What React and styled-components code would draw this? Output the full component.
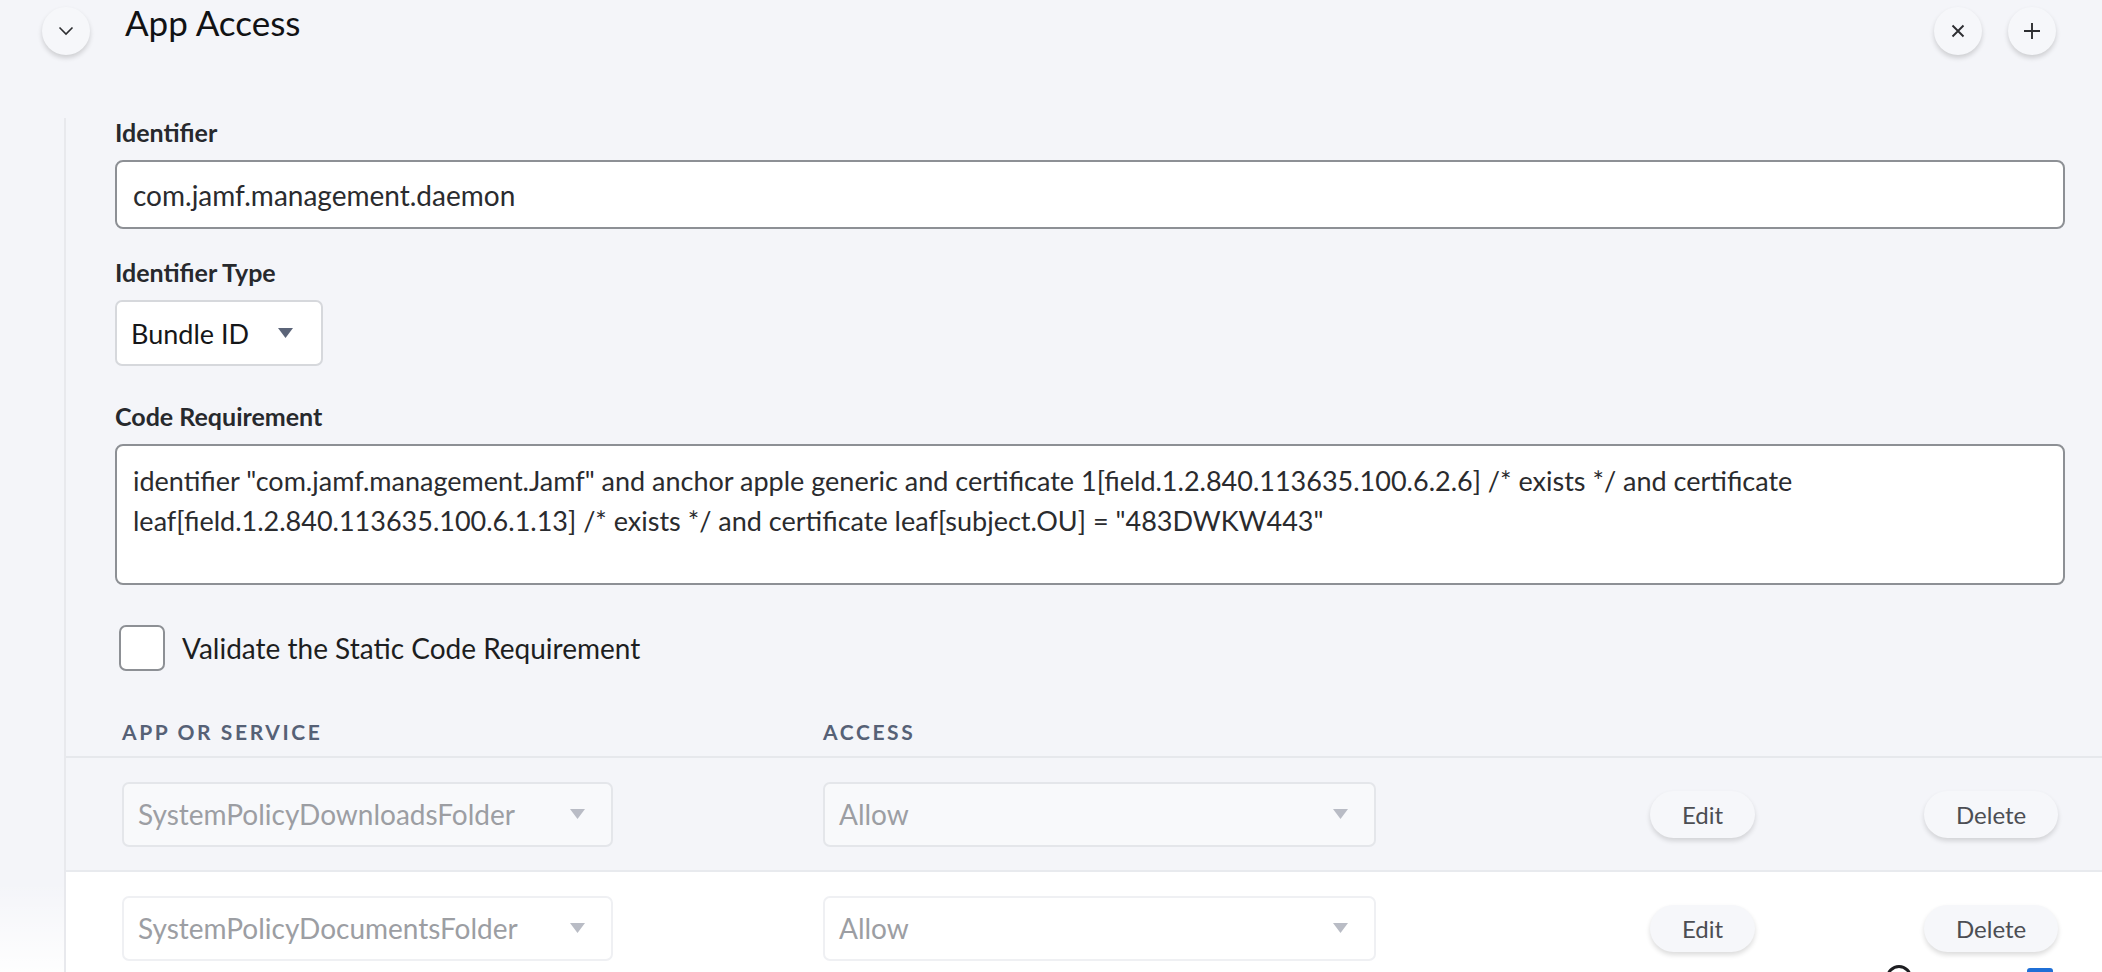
import React from 'react'
import styled, { createGlobalStyle } from 'styled-components'

const GlobalStyle = createGlobalStyle`
    html, body {
        margin: 0;
        padding: 0;
        background: #f4f5f9;
        font-family: Lato, "Open Sans", sans-serif;
        color: #1f2023;
        overflow: hidden;
    }
`

const rows = [
    { id: 1, service: 'SystemPolicyDownloadsFolder', access: 'Allow', shaded: true },
    { id: 2, service: 'SystemPolicyDocumentsFolder', access: 'Allow', shaded: false },
]

const codeLines = [
    'identifier "com.jamf.management.Jamf" and anchor apple generic and certificate 1[field.1.2.840.113635.100.6.2.6] /* exists */ and certificate',
    'leaf[field.1.2.840.113635.100.6.1.13] /* exists */ and certificate leaf[subject.OU] = "483DWKW443"',
]

function Caret({ muted }) {
    return (
        <svg width="15" height="10" viewBox="0 0 15 10">
            <path d="M0 0 H15 L7.5 10 Z" fill={muted ? '#b9bcc5' : '#5b6478'} />
        </svg>
    )
}

function App() {
    return (
        <Page>
            <GlobalStyle />
            <Header>
                <RoundButton>
                    <svg width="16" height="10" viewBox="0 0 16 10">
                        <path d="M1.5 1.5 L8 8 L14.5 1.5" fill="none" stroke="#2d2e31" strokeWidth="1.6" />
                    </svg>
                </RoundButton>
                <Title>App Access</Title>
                <HeaderActions>
                    <RoundButton>
                        <svg width="18" height="18" viewBox="0 0 18 18">
                            <path d="M3.5 3.5 L14.5 14.5 M14.5 3.5 L3.5 14.5" stroke="#2d2e31" strokeWidth="1.9" />
                        </svg>
                    </RoundButton>
                    <RoundButton>
                        <svg width="20" height="20" viewBox="0 0 20 20">
                            <path d="M10 2 V18 M2 10 H18" stroke="#2d2e31" strokeWidth="1.9" />
                        </svg>
                    </RoundButton>
                </HeaderActions>
            </Header>

            <Body>
                <Form>
                    <Label>Identifier</Label>
                    <TextInput>com.jamf.management.daemon</TextInput>

                    <Label gap="29px">Identifier Type</Label>
                    <Select width="208px">
                        <span>Bundle ID</span>
                        <Caret />
                    </Select>

                    <Label gap="36px">Code Requirement</Label>
                    <TextArea>
                        {codeLines[0]}
                        <br />
                        {codeLines[1]}
                    </TextArea>

                    <CheckRow>
                        <CheckBox />
                        <span>Validate the Static Code Requirement</span>
                    </CheckRow>
                </Form>

                <Table>
                    <HeadRow>
                        <HeadCell>App or Service</HeadCell>
                        <HeadCell>Access</HeadCell>
                    </HeadRow>
                    {rows.map((row) => (
                        <Row key={row.id} shaded={row.shaded}>
                            <RowSelect width="491px" shaded={row.shaded}>
                                <span>{row.service}</span>
                                <Caret muted />
                            </RowSelect>
                            <RowSelect width="553px" shaded={row.shaded}>
                                <span>{row.access}</span>
                                <Caret muted />
                            </RowSelect>
                            <PillButton>Edit</PillButton>
                            <PillButton>Delete</PillButton>
                        </Row>
                    ))}
                </Table>
            </Body>

            <SideFade />
            <Widget>
                <Dot />
                <Square />
            </Widget>
        </Page>
    )
}

export default App

const Page = styled.div`
    position: relative;
    width: 2102px;
    height: 972px;
    overflow: hidden;
`
const Header = styled.div`
    display: flex;
    align-items: flex-start;
    padding: 7px 46px 0 42px;
    height: 118px;
    box-sizing: border-box;
`
const RoundButton = styled.div`
    width: 48px;
    height: 48px;
    border-radius: 50%;
    background: #f6f7fa;
    box-shadow: 0 3px 5px rgba(0, 0, 0, 0.16);
    display: flex;
    align-items: center;
    justify-content: center;
    flex-shrink: 0;
`
const Title = styled.h1`
    margin: -5px 0 0 35px;
    font-size: 35px;
    font-weight: 400;
    color: #111214;
    line-height: 40px;
    flex: 1;
`
const HeaderActions = styled.div`
    display: flex;
    gap: 26px;
`
const Body = styled.div`
    margin-left: 64px;
    border-left: 2px solid #e8e9ed;
`
const Form = styled.div`
    padding: 0 37px 0 49px;
    display: flex;
    flex-direction: column;
`
const Label = styled.div`
    margin-top: ${(p) => p.gap || '0'};
    font-size: 25px;
    font-weight: 700;
    color: #27292d;
    line-height: 28px;
    margin-bottom: 14px;
`
const TextInput = styled.div`
    height: 69px;
    box-sizing: border-box;
    border: 2px solid #8d9095;
    border-radius: 8px;
    background: #fff;
    display: flex;
    align-items: center;
    padding: 0 16px;
    font-size: 28px;
    color: #2a2b2e;
`
const Select = styled.div`
    width: ${(p) => p.width};
    height: 66px;
    box-sizing: border-box;
    border: 2px solid #d6d8dc;
    border-radius: 7px;
    background: #fff;
    display: flex;
    align-items: center;
    justify-content: space-between;
    padding: 0 28px 0 14px;
    font-size: 27px;
    color: #151618;
`
const TextArea = styled.div`
    height: 141px;
    box-sizing: border-box;
    border: 2px solid #8d9095;
    border-radius: 8px;
    background: #fff;
    padding: 15px 16px;
    font-size: 27px;
    line-height: 40px;
    color: #2a2b2e;
    white-space: nowrap;
`
const CheckRow = styled.div`
    display: flex;
    align-items: center;
    gap: 17px;
    margin: 40px 0 0 4px;
    font-size: 28px;
    color: #1d1e21;
`
const CheckBox = styled.div`
    width: 46px;
    height: 46px;
    box-sizing: border-box;
    border: 2px solid #8d9095;
    border-radius: 7px;
    background: #fff;
`
const Table = styled.div`
    margin-top: 35px;
`
const gridCols = `
    display: grid;
    grid-template-columns: 701px 827px 274px 1fr;
    align-items: center;
    padding-left: 56px;
`
const HeadRow = styled.div`
    ${gridCols}
    height: 50px;
    border-bottom: 2px solid #e6e8ec;
`
const HeadCell = styled.div`
    font-size: 21px;
    font-weight: 700;
    letter-spacing: 2.6px;
    text-transform: uppercase;
    color: #566176;
`
const Row = styled.div`
    ${gridCols}
    height: 112px;
    background: ${(p) => (p.shaded ? '#f4f5f9' : '#fff')};
    border-bottom: 2px solid #e8eaee;
`
const RowSelect = styled.div`
    width: ${(p) => p.width};
    height: 65px;
    box-sizing: border-box;
    border: 2px solid ${(p) => (p.shaded ? '#e4e6ea' : '#eff0f3')};
    border-radius: 7px;
    background: ${(p) => (p.shaded ? '#f8f9fb' : '#fff')};
    display: flex;
    align-items: center;
    justify-content: space-between;
    padding: 0 26px 0 14px;
    font-size: 28px;
    color: #9c9ea3;
`
const PillButton = styled.div`
    justify-self: start;
    height: 47px;
    padding: 0 32px;
    border-radius: 24px;
    background: #f6f7fa;
    box-shadow: 0 3px 5px rgba(0, 0, 0, 0.14);
    display: flex;
    align-items: center;
    font-size: 24px;
    color: #4c4e53;
`
const SideFade = styled.div`
    position: absolute;
    left: 0;
    bottom: 0;
    width: 64px;
    height: 90px;
    background: linear-gradient(to bottom, rgba(255, 255, 255, 0), rgba(255, 255, 255, 0.9));
    pointer-events: none;
`
const Widget = styled.div`
    position: absolute;
    bottom: -22px;
    left: 1886px;
    display: flex;
    align-items: flex-start;
    gap: 115px;
`
const Dot = styled.div`
    width: 26px;
    height: 26px;
    border-radius: 50%;
    border: 3px solid #1d1e21;
    box-sizing: border-box;
`
const Square = styled.div`
    width: 26px;
    height: 26px;
    margin-top: 3px;
    border-radius: 3px;
    background: #1f6fd6;
`
